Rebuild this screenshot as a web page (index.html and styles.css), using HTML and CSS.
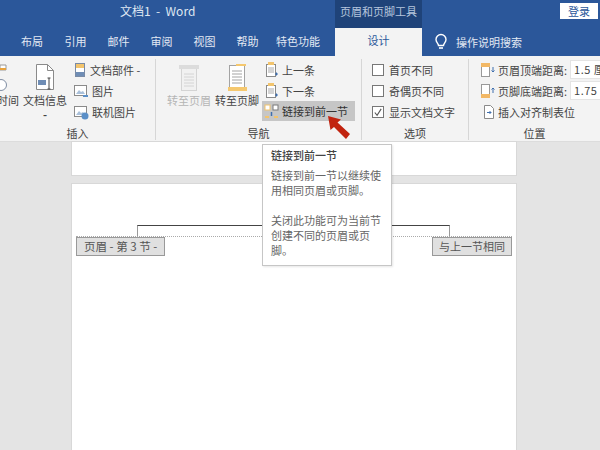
FILE: index.html
```html
<!DOCTYPE html>
<html lang="zh">
<head>
    <meta charset="UTF-8">
    <title>文档1 - Word</title>
    <link rel="stylesheet" href="styles.css">
</head>
<body>

<div class="app">
    <div class="titlebar">
        <div class="doc-title">文档1 &nbsp;-&nbsp; Word</div>
        <div class="tool-title">页眉和页脚工具</div>
        <div class="login-wrap"><span class="login">登录</span></div>
    </div>

    <div class="tabs">
        <span class="tab tab-first">布局</span>
        <span class="tab">引用</span>
        <span class="tab">邮件</span>
        <span class="tab">审阅</span>
        <span class="tab">视图</span>
        <span class="tab">帮助</span>
        <span class="tab tab-wide">特色功能</span>
        <span class="tab-active">设计</span>
        <svg class="bulb" width="16" height="18" viewBox="0 0 16 18">
            <path d="M5.500 12.500c0-2-2.500-3-2.500-6a5 5 0 0 1 10 0c0 3-2.500 4-2.500 6z" fill="none" stroke="#fff" stroke-width="1.400"/>
            <path d="M6 15h4" stroke="#fff" stroke-width="1.600"/>
        </svg>
        <span class="search">操作说明搜索</span>
    </div>

    <div class="ribbon">
        <div class="group group-insert">
            <div class="group-body">
                <div class="big-btn btn-time">
                    <svg width="20" height="28" viewBox="0 0 20 28">
                        <path d="M0 2h6v5H0z" fill="#fff" stroke="#999"/>
                        <path d="M0 6h6" stroke="#e8a23c" stroke-width="2"/>
                        <circle cx="1" cy="22" r="5.500" fill="#fff" stroke="#7f8da3"/>
                    </svg>
                    <span>时间</span>
                </div>
                <div class="big-btn btn-info">
                    <svg width="20" height="28" viewBox="0 0 20 28">
                        <path d="M1.500 1.500h11l6 6v19h-17z" fill="#fff" stroke="#8a8a8a"/>
                        <path d="M12.500 1.500v6h6" fill="none" stroke="#8a8a8a"/>
                        <rect x="3" y="17" width="8" height="5" fill="#6f8db5"/>
                        <path d="M14 15v11M12.500 15h3M12.500 26h3" stroke="#444"/>
                    </svg>
                    <span>文档信息</span>
                    <span class="dash">-</span>
                </div>
                <div class="small-col col-parts">
                    <div class="small-btn">
                        <svg width="14" height="16" viewBox="0 0 14 16">
                            <rect x="2.500" y="1.500" width="9" height="13" fill="#fff" stroke="#7a8ba5"/>
                            <rect x="3" y="2" width="8" height="4" fill="#f2c46d"/>
                            <rect x="3" y="10" width="8" height="4" fill="#6f8db5"/>
                        </svg>
                        <span>文档部件 -</span>
                    </div>
                    <div class="small-btn">
                        <svg width="16" height="16" viewBox="0 0 16 16">
                            <rect x="1.500" y="2.500" width="12" height="10" fill="#fff" stroke="#8a8a8a"/>
                            <path d="M3 11l3-4 2 2 2-1 2 3z" fill="#a9c0da"/>
                            <path d="M10 12h5v2h-5z" fill="#5b8fc7"/>
                        </svg>
                        <span>图片</span>
                    </div>
                    <div class="small-btn">
                        <svg width="16" height="16" viewBox="0 0 16 16">
                            <rect x="1.500" y="2.500" width="12" height="10" fill="#fff" stroke="#8a8a8a"/>
                            <path d="M3 11l3-4 2 2 2-1 2 3z" fill="#a9c0da"/>
                            <circle cx="12" cy="12" r="3.500" fill="#5b8fc7"/>
                        </svg>
                        <span>联机图片</span>
                    </div>
                </div>
            </div>
            <div class="group-label">插入</div>
        </div>

        <div class="group group-nav">
            <div class="group-body">
                <div class="big-btn btn-goto disabled">
                    <svg width="22" height="28" viewBox="0 0 22 28">
                        <rect x="3.500" y="1.500" width="15" height="25" fill="#f1f1f1" stroke="#d4d4d4"/>
                        <rect x="1" y="1" width="20" height="4" fill="#dcdcdc"/>
                        <path d="M6 10h10M6 13h10M6 16h10M6 19h10M6 22h10" stroke="#d4d4d4"/>
                    </svg>
                    <span>转至页眉</span>
                </div>
                <div class="big-btn btn-goto">
                    <svg width="22" height="28" viewBox="0 0 22 28">
                        <rect x="3.500" y="1.500" width="15" height="25" fill="#fff" stroke="#a3a3a3"/>
                        <rect x="2" y="23" width="19" height="4" fill="#f5c86f"/>
                        <rect x="10" y="0" width="10" height="2" fill="#f5c86f"/>
                        <path d="M6 7h10M6 10h10M6 13h10M6 16h10M6 19h10" stroke="#a3a3a3"/>
                    </svg>
                    <span>转至页脚</span>
                </div>
                <div class="small-col col-nav">
                    <div class="small-btn">
                        <svg width="14" height="16" viewBox="0 0 14 16">
                            <rect x="1.500" y="2.500" width="9" height="12" fill="#fff" stroke="#8a8a8a"/>
                            <rect x="3" y="0" width="6" height="3" fill="#f2c46d"/>
                            <path d="M3 6h6M3 8h6M3 10h6" stroke="#a9a9a9"/>
                            <path d="M10 12h3M11.500 10.500v3" stroke="#3f6fae"/>
                        </svg>
                        <span>上一条</span>
                    </div>
                    <div class="small-btn">
                        <svg width="14" height="16" viewBox="0 0 14 16">
                            <rect x="1.500" y="2.500" width="9" height="12" fill="#fff" stroke="#8a8a8a"/>
                            <rect x="3" y="0" width="6" height="3" fill="#f2c46d"/>
                            <path d="M3 6h6M3 8h6M3 10h6" stroke="#a9a9a9"/>
                            <path d="M10 12h3M11.500 10.500v3" stroke="#3f6fae"/>
                        </svg>
                        <span>下一条</span>
                    </div>
                    <div class="small-btn link-btn">
                        <svg width="16" height="16" viewBox="0 0 16 16">
                            <rect x="1" y="2" width="5" height="5" fill="#fff" stroke="#f2c46d"/>
                            <rect x="9" y="2" width="5" height="5" fill="#fff" stroke="#7a7a7a"/>
                            <path d="M1 14h4M10 14h4" stroke="#f2c46d" stroke-width="2"/>
                            <path d="M7.500 9v4" stroke="#3f6fae" stroke-width="1.500"/>
                        </svg>
                        <span>链接到前一节</span>
                    </div>
                </div>
            </div>
            <div class="group-label">导航</div>
        </div>

        <div class="group group-opt">
            <div class="group-body opt-list">
                <label class="opt"><span class="check"></span>首页不同</label>
                <label class="opt"><span class="check"></span>奇偶页不同</label>
                <label class="opt">
                    <span class="check">
                        <svg width="11" height="11" viewBox="0 0 11 11"><path d="M2 5.500l2.500 3 4.500-7" fill="none" stroke="#555" stroke-width="1.200"/></svg>
                    </span>显示文档文字
                </label>
            </div>
            <div class="group-label">选项</div>
        </div>

        <div class="group group-pos">
            <div class="group-body pos-list">
                <div class="pos-row">
                    <svg width="16" height="16" viewBox="0 0 16 16">
                        <rect x="1.500" y="1.500" width="8" height="13" fill="#fff" stroke="#999"/>
                        <rect x="1" y="1" width="9" height="4" fill="#f2b866"/>
                        <path d="M13 5v5M11.500 8.500l1.500 1.500 1.500-1.500" fill="none" stroke="#3f6fae"/>
                    </svg>
                    <span>页眉顶端距离:</span>
                    <span class="num">1.5 厘</span>
                </div>
                <div class="pos-row">
                    <svg width="16" height="16" viewBox="0 0 16 16">
                        <rect x="1.500" y="1.500" width="8" height="13" fill="#fff" stroke="#999"/>
                        <rect x="1" y="11" width="9" height="4" fill="#f2b866"/>
                        <path d="M13 5v5M11.500 6.500l1.500-1.500 1.500 1.500" fill="none" stroke="#3f6fae"/>
                    </svg>
                    <span>页脚底端距离:</span>
                    <span class="num">1.75</span>
                </div>
                <div class="pos-row pos-tab">
                    <svg width="14" height="16" viewBox="0 0 14 16">
                        <path d="M2.500 1.500h6l3 3v10h-9z" fill="#fff" stroke="#8a8a8a"/>
                        <path d="M5 8.500h4M7.500 7l1.500 1.500-1.500 1.500" fill="none" stroke="#3f6fae"/>
                    </svg>
                    <span>插入对齐制表位</span>
                </div>
            </div>
            <div class="group-label">位置</div>
        </div>
    </div>

    <div class="doc">
        <div class="page page-prev"></div>
        <div class="page page-cur">
            <div class="header-mark"></div>
            <div class="header-rule">
                <span class="sec-tag sec-tag-left">页眉 - 第 3 节 -</span>
                <span class="sec-tag">与上一节相同</span>
            </div>
        </div>
    </div>

    <div class="tooltip">
        <div class="tip-title">链接到前一节</div>
        <p>链接到前一节以继续使用相同页眉或页脚。</p>
        <p>关闭此功能可为当前节创建不同的页眉或页脚。</p>
    </div>

    <svg class="arrow" width="28" height="28" viewBox="0 0 28 28">
        <path d="M1 1l13 3.500-3.500 3 12.500 11.500-4 5-12-12-3.500 3z" fill="#c1230f"/>
    </svg>
</div>

</body>
</html>
```

FILE: styles.css
```css
* {
    box-sizing: border-box;
}

html, body {
    margin: 0;
    height: 100%;
    overflow: hidden;
}

body {
    font-family: "Noto Sans CJK SC", "Liberation Sans", sans-serif;
    font-size: 11px;
    color: #444;
}

.app {
    position: relative;
    width: 600px;
    height: 450px;
    overflow: hidden;
    display: flex;
    flex-direction: column;
}

/* title bar */
.titlebar {
    height: 28px;
    background: #2b579a;
    display: flex;
    color: #dfe7f2;
}

.doc-title {
    width: 335px;
    padding-left: 120px;
    font-size: 12px;
    line-height: 22px;
}

.tool-title {
    width: 87px;
    background: #1f4379;
    text-align: center;
    line-height: 22px;
    color: #b6c6dd;
}

.login-wrap {
    flex: 1;
    display: flex;
    justify-content: flex-end;
    padding: 3px 2px 0 0;
}

.login {
    width: 38px;
    height: 16px;
    background: #fff;
    color: #2b579a;
    text-align: center;
    line-height: 16px;
}

/* tabs */
.tabs {
    height: 28px;
    background: #2b579a;
    display: flex;
    align-items: center;
    color: #e3e9f3;
}

.tab {
    width: 43px;
    text-align: center;
    padding-bottom: 3px;
}

.tab-first {
    margin-left: 10px;
    width: 44px;
}

.tab-wide {
    width: 58px;
}

.tab-active {
    width: 87px;
    height: 28px;
    margin-left: 8px;
    background: #f3f3f3;
    color: #2b579a;
    text-align: center;
    line-height: 25px;
}

.bulb {
    margin-left: 11px;
}

.search {
    margin-left: 7px;
    padding-bottom: 1px;
}

/* ribbon */
.ribbon {
    height: 86px;
    background: #f3f3f3;
    display: flex;
    padding-top: 3px;
    border-bottom: 1px solid #dcdcdc;
}

.group {
    display: flex;
    flex-direction: column;
    flex-shrink: 0;
    border-right: 1px solid #d6d6d6;
    margin-bottom: 1px;
}

.group-insert {
    width: 156px;
}

.group-nav {
    width: 206px;
}

.group-opt {
    width: 107px;
}

.group-pos {
    flex: 1;
    flex-shrink: 1;
    min-width: 0;
    border-right: 0;
}

.group-body {
    flex: 1;
    min-height: 0;
    display: flex;
}

.group-label {
    height: 15px;
    padding-top: 2px;
    text-align: center;
    line-height: 13px;
}

.big-btn {
    display: flex;
    flex-direction: column;
    align-items: center;
    line-height: 14px;
    flex-shrink: 0;
}

.btn-time {
    width: 19px;
    align-items: flex-start;
}

.btn-time span {
    white-space: nowrap;
    margin-left: -3px;
}

.btn-time svg,
.btn-info svg {
    margin-top: 4px;
    margin-bottom: 2px;
}

.btn-info {
    width: 50px;
    margin-left: 1px;
}

.dash {
    font-weight: bold;
}

.small-col {
    display: flex;
    flex-direction: column;
}

.col-parts {
    margin-left: 3px;
}

.col-nav {
    margin-left: 4px;
}

.small-btn {
    height: 21px;
    display: flex;
    align-items: center;
    gap: 3px;
    white-space: nowrap;
}

.btn-goto {
    width: 48px;
    padding-top: 5px;
}

.btn-goto svg {
    margin-bottom: 1px;
}

.group-nav .group-body {
    padding-left: 9px;
}

.disabled {
    color: #b5b5b5;
}

.link-btn {
    background: #c6c6c6;
    width: 93px;
    height: 20px;
    padding-left: 2px;
    gap: 2px;
    margin-left: -3px;
    color: #333;
}

/* options */
.opt-list {
    flex-direction: column;
    padding: 0 0 0 10px;
}

.opt {
    height: 21px;
    display: flex;
    align-items: center;
    gap: 5px;
}

.check {
    width: 12px;
    height: 12px;
    border: 1px solid #777;
    background: #fff;
    display: flex;
}

/* position */
.pos-list {
    flex-direction: column;
    padding: 0 0 0 11px;
}

.pos-row {
    height: 21px;
    display: flex;
    align-items: center;
    gap: 2px;
    white-space: nowrap;
}

.pos-row svg {
    flex-shrink: 0;
}

.num {
    flex-shrink: 0;
    width: 40px;
    height: 19px;
    margin-left: 1px;
    padding-left: 3px;
    background: #fff;
    border: 1px solid #e4e4e4;
    line-height: 17px;
    letter-spacing: 0.500px;
    overflow: hidden;
}

.pos-tab {
    padding-left: 2px;
}

/* document area */
.doc {
    flex: 1;
    background: #e4e4e4;
    display: flex;
    flex-direction: column;
    align-items: center;
    padding-right: 12px;
    gap: 9px;
}

.page {
    width: 444px;
    background: #fff;
    box-shadow: 0 0 0 1px #d8d8d8;
}

.page-prev {
    height: 33px;
}

.page-cur {
    flex: 1;
    padding-top: 41px;
}

.header-mark {
    width: 313px;
    height: 12px;
    margin-left: 65px;
    border: 1px solid #9a9a9a;
    border-top-color: #444;
    border-bottom: 0;
}

.header-rule {
    border-top: 1px dotted #aaa;
    margin: -1px 4px 0;
    display: flex;
    justify-content: space-between;
}

.sec-tag {
    height: 19px;
    padding: 0 6px;
    background: #e0e0e0;
    border: 1px solid #999;
    color: #555;
    line-height: 16px;
}

.sec-tag-left {
    padding: 0 7px;
    font-size: 11.500px;
}

/* tooltip and annotation, over the page */
.tooltip {
    position: absolute;
    left: 262px;
    top: 144px;
    width: 130px;
    height: 122px;
    padding: 3px 8px;
    background: #fff;
    border: 1px solid #c6c6c6;
    box-shadow: 1px 1px 2px rgba(0, 0, 0, 0.100);
    line-height: 15px;
    color: #666;
}

.tip-title {
    color: #444;
    font-weight: 500;
    margin-bottom: 5px;
}

.tooltip p {
    margin: 0 0 15px;
}

.arrow {
    position: absolute;
    left: 327px;
    top: 115px;
}
```
